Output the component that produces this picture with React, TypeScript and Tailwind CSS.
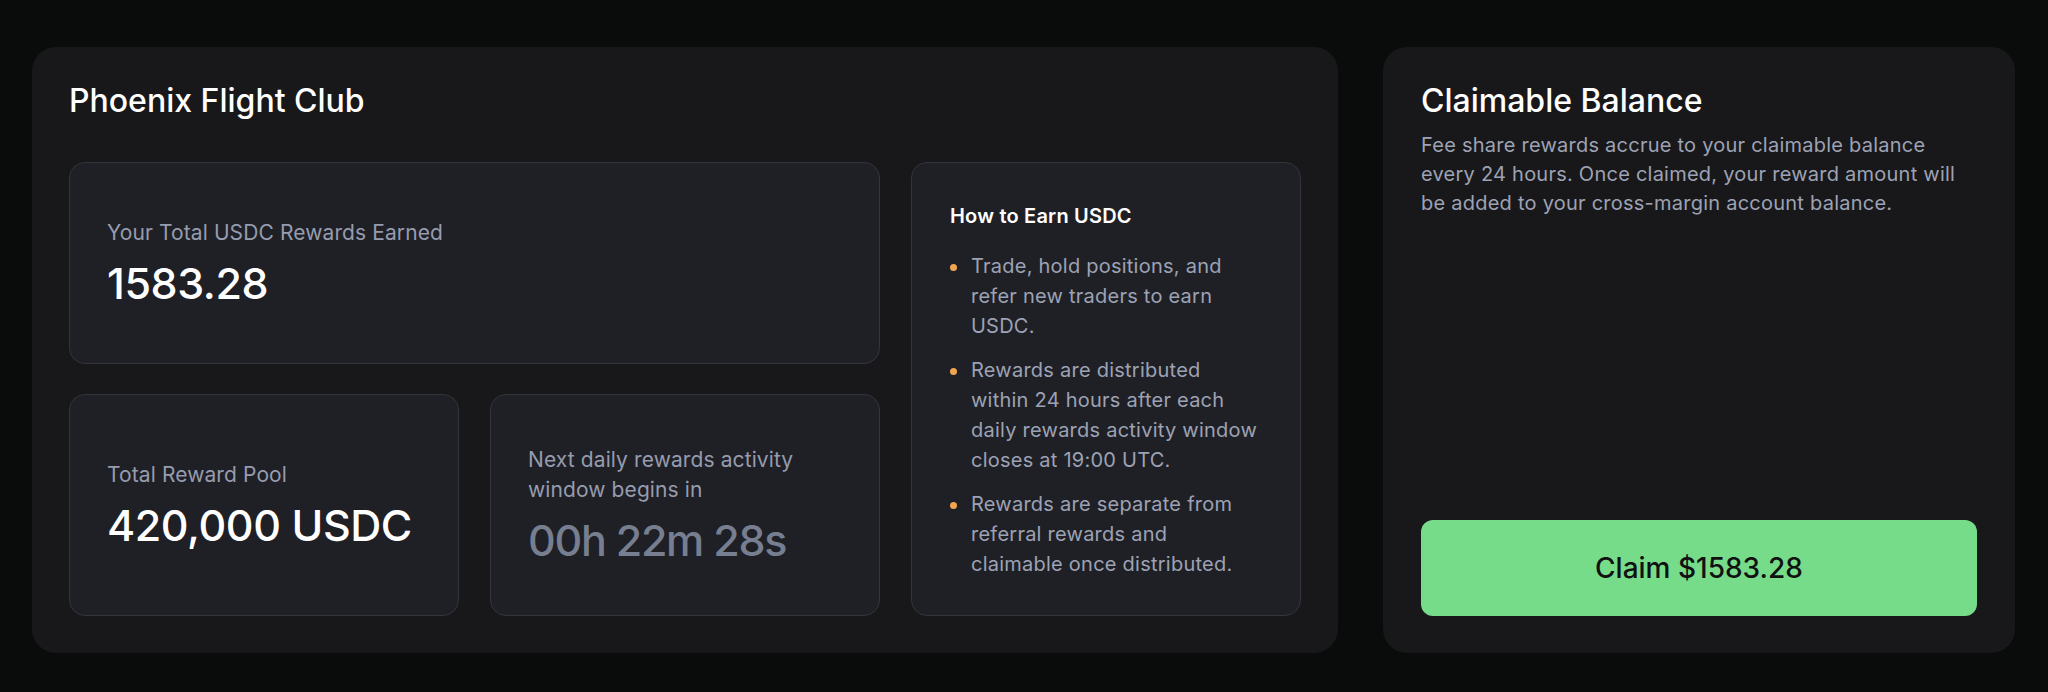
const howToEarn = [
  "Trade, hold positions, and refer new traders to earn USDC.",
  "Rewards are distributed within 24 hours after each daily rewards activity window closes at 19:00 UTC.",
  "Rewards are separate from referral rewards and claimable once distributed.",
];

const StatCard = ({
  label,
  value,
  valueClass = "text-white tracking-[-0.01em]",
  className = "",
}: {
  label: string;
  value: string;
  valueClass?: string;
  className?: string;
}) => (
  <div
    className={`flex flex-col justify-center rounded-2xl border border-[#34353c] bg-[#1f2026] px-[37px] ${className}`}
  >
    <div className="text-[21px] leading-[30px] tracking-[0.005em] text-[#969cae]">{label}</div>
    <div className={`mt-[9px] text-[43px] font-medium leading-[52px] ${valueClass}`}>{value}</div>
  </div>
);

export default function App() {
  return (
    <div className="flex h-[692px] w-[2048px] gap-[45px] bg-[#0a0b0b] pl-[32px] pt-[47px] font-['Inter',sans-serif]">
      {/* Rewards overview */}
      <div className="flex h-[606px] w-[1306px] flex-col rounded-3xl bg-[#18181a] px-[37px] pt-[34px]">
        <h1 className="text-[32px] font-medium leading-[40px] text-white">Phoenix Flight Club</h1>

        <div className="mt-[41px] flex gap-[31px]">
          <div className="flex w-[811px] flex-col gap-[30px]">
            <StatCard className="h-[202px]" label="Your Total USDC Rewards Earned" value="1583.28" />
            <div className="flex gap-[31px]">
              <StatCard className="h-[222px] flex-1" label="Total Reward Pool" value="420,000 USDC" />
              <StatCard
                className="h-[222px] flex-1"
                label="Next daily rewards activity window begins in"
                value="00h 22m 28s"
                valueClass="text-[#767e90] tracking-[-0.03em]"
              />
            </div>
          </div>

          <div className="h-[454px] w-[390px] rounded-2xl border border-[#34353c] bg-[#1f2026] px-[38px] pt-[38px]">
            <h2 className="text-[20px] font-semibold leading-[30px] tracking-[0.01em] text-white">How to Earn USDC</h2>
            <ul className="mt-[20px] flex flex-col gap-[14px]">
              {howToEarn.map((item) => (
                <li
                  key={item}
                  className="flex gap-[14px] text-[20px] leading-[30px] tracking-[0.012em] text-[#9da2b4]"
                >
                  <span className="mt-[13px] h-[7px] w-[7px] shrink-0 rounded-full bg-[#f3a44e]" />
                  <span>{item}</span>
                </li>
              ))}
            </ul>
          </div>
        </div>
      </div>

      {/* Claim panel */}
      <div className="flex h-[606px] w-[632px] flex-col rounded-3xl bg-[#18181a] px-[38px] pb-[37px] pt-[34px]">
        <h2 className="text-[32px] font-medium leading-[40px] text-white">Claimable Balance</h2>
        <p className="mt-[10px] text-[20px] leading-[29px] tracking-[0.012em] text-[#9da2b4]">
          Fee share rewards accrue to your claimable balance every 24 hours. Once claimed, your reward amount
          will be added to your cross-margin account balance.
        </p>
        <button className="mt-auto h-[96px] w-full rounded-xl bg-[#77dc8a] text-[28px] font-medium text-[#111]">
          Claim $1583.28
        </button>
      </div>
    </div>
  );
}
